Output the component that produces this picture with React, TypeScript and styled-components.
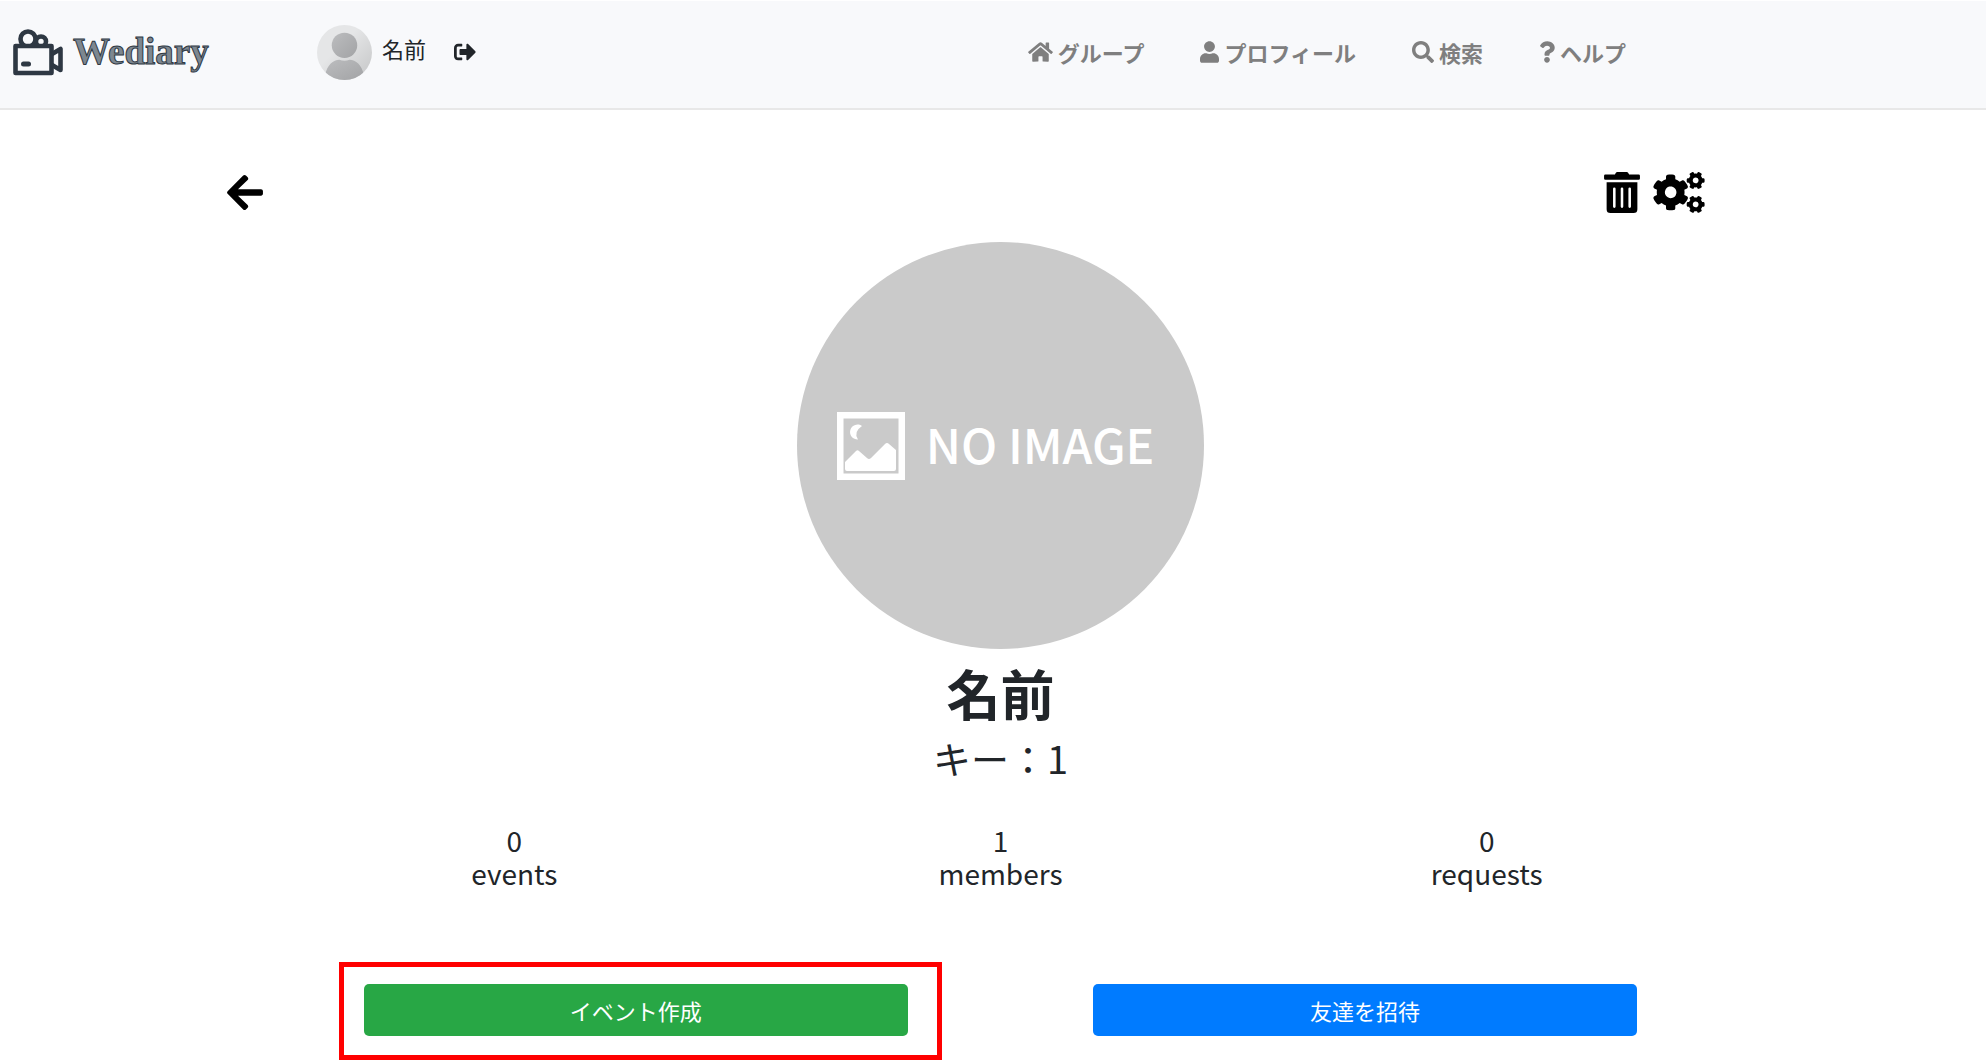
import React from "react";
import styled, { createGlobalStyle } from "styled-components";
import {
  FaArrowLeft,
  FaCogs,
  FaHome,
  FaQuestion,
  FaSearch,
  FaSignOutAlt,
  FaTrashAlt,
  FaUser,
} from "react-icons/fa";

const GlobalStyle = createGlobalStyle`
  *, *::before, *::after { box-sizing: border-box; }
  body {
    margin: 0;
    background: #fff;
    color: #212529;
    font-family: "Noto Sans CJK JP", "Noto Sans", sans-serif;
    font-size: 22px;
    line-height: 32px;
  }
`;

const Header = styled.header`
  display: flex;
  align-items: center;
  min-height: 110px;
  padding: 0 360px 5px 12px;
  background: #f8f9fb;
  border-top: 1px solid #fff;
  border-bottom: 2px solid #e8e8e8;
`;

const Brand = styled.a`
  display: flex;
  align-items: center;
  gap: 9px;
  width: 305px;
  color: #2e3843;
  text-decoration: none;
`;

const BrandName = styled.span`
  color: #7d8790;
  font-family: "Liberation Serif", serif;
  font-size: 37px;
  font-weight: 700;
  line-height: 40px;
  -webkit-text-stroke: 1px #2e3843;
`;

const Account = styled.div`
  display: flex;
  align-items: center;
  gap: 10px;
`;

const AccountName = styled.span`
  padding-bottom: 8px;
`;

const LogoutButton = styled.button`
  display: flex;
  margin-left: 18px;
  padding: 0;
  border: 0;
  background: none;
  color: #212529;
  font-size: 22px;
  cursor: pointer;
`;

const Nav = styled.nav`
  display: flex;
  gap: 56px;
  margin-left: auto;
`;

const NavLink = styled.a<{ $iconWidth: number }>`
  display: flex;
  align-items: center;
  gap: 5px;
  color: #7f7f7f;
  font-weight: 700;
  text-decoration: none;
  white-space: nowrap;

  svg {
    flex: none;
    width: ${(p) => p.$iconWidth}px;
    height: 22px;
  }
`;

const Main = styled.main`
  display: flex;
  flex-direction: column;
  align-items: center;
  padding: 62px 0 26px 15px;
`;

const Toolbar = styled.div`
  display: flex;
  align-self: flex-start;
  align-items: center;
  justify-content: space-between;
  width: 75%;
  margin-left: 212px;
`;

const ToolGroup = styled.div`
  display: flex;
  gap: 13px;
`;

const IconButton = styled.button<{ $iconWidth: number }>`
  display: flex;
  padding: 0;
  border: 0;
  background: none;
  color: #000;
  cursor: pointer;

  svg {
    flex: none;
    width: ${(p) => p.$iconWidth}px;
    height: 41px;
  }
`;

const GroupImage = styled.div`
  display: flex;
  align-items: center;
  justify-content: center;
  gap: 21px;
  width: 407px;
  height: 407px;
  margin-top: 29px;
  padding-right: 10px;
  border-radius: 50%;
  background: #cacaca;
  color: #fff;
  white-space: nowrap;
`;

const GroupImageText = styled.span`
  padding-bottom: 6px;
  font-size: 48px;
  font-weight: 500;
  line-height: 68px;
`;

const GroupName = styled.h1`
  margin: 12px 0 0;
  font-size: 54px;
  font-weight: 700;
  line-height: 64px;
`;

const GroupKey = styled.p`
  margin: 10px 0 0;
  font-size: 38px;
  line-height: 46px;
`;

const Stats = styled.dl`
  display: grid;
  grid-template-columns: repeat(3, 1fr);
  width: 74%;
  margin: 43px 0 0;
`;

const Stat = styled.div`
  display: flex;
  flex-direction: column-reverse;
  text-align: center;
  font-size: 28px;
  line-height: 33px;

  dd {
    margin: 0;
  }
`;

const Actions = styled.div`
  display: grid;
  grid-template-columns: repeat(2, 1fr);
  justify-items: center;
  width: 74%;
  margin-top: 94px;
`;

const ActionSlot = styled.div`
  position: relative;
  width: calc(75% - 3px);
`;

const ActionButton = styled.button<{ $color: string }>`
  display: block;
  width: 100%;
  height: 52px;
  padding: 0;
  border: 0;
  border-radius: 5px;
  background: ${(p) => p.$color};
  color: #fff;
  font: inherit;
  cursor: pointer;
`;

const Highlight = styled.div`
  position: absolute;
  inset: -22px -34px -24px -25px;
  border: 5px solid #f00;
  pointer-events: none;
`;

function CameraLogo() {
  return (
    <svg width="52" height="48" viewBox="0 0 52 48" fill="none" stroke="currentColor" strokeWidth="4.6" strokeLinejoin="round" aria-hidden="true">
      <circle cx="16" cy="11" r="7.5" />
      <circle cx="29" cy="13.500" r="5" />
      <rect x="3.500" y="18" width="36" height="27" fill="#f8f9fb" />
      <path d="M40 26 48.500 21V42L40 37" />
      <path d="M11.500 36H16.500" strokeWidth="5" strokeLinecap="round" />
    </svg>
  );
}

function Avatar() {
  return (
    <svg width="55" height="55" viewBox="0 0 54 54" aria-hidden="true">
      <defs>
        <linearGradient id="avatarBack" x1="0" y1="0" x2="1" y2="1">
          <stop offset="0.4" stopColor="#e5e6e7" />
          <stop offset="1" stopColor="#c4c5c6" />
        </linearGradient>
        <linearGradient id="avatarBody" x1="0" y1="0" x2="1" y2="1">
          <stop offset="0" stopColor="#bcbdbf" />
          <stop offset="1" stopColor="#a2a3a5" />
        </linearGradient>
        <clipPath id="avatarClip"><circle cx="27" cy="27" r="27" /></clipPath>
      </defs>
      <g clipPath="url(#avatarClip)">
        <rect width="54" height="54" fill="url(#avatarBack)" />
        <circle cx="27" cy="20" r="12.5" fill="url(#avatarBody)" />
        <path d="M8 54V49C10 39 16 34 22 34Q27 36 32 34C38 34 44 39 46 49V54Z" fill="url(#avatarBody)" />
      </g>
    </svg>
  );
}

function PictureIcon() {
  return (
    <svg width="68" height="68" viewBox="0 0 68 68" aria-hidden="true">
      <rect x="3.25" y="3.25" width="61.5" height="61.5" fill="none" stroke="#fff" strokeWidth="6.5" />
      <path d="M25 14A7.5 7.5 0 1 0 21 27.500Q16 20 25 14Z" fill="#fff" />
      <path d="M8 50 19 39Q20.500 37.500 22 39L30 46Q32 48 34 46L48 32Q50 30 52 32L59 38V57Q59 59 57 59H10Q8 59 8 57Z" fill="#fff" />
    </svg>
  );
}

const navItems = [
  { label: "グループ", icon: <FaHome />, iconWidth: 25 },
  { label: "プロフィール", icon: <FaUser />, iconWidth: 19 },
  { label: "検索", icon: <FaSearch />, iconWidth: 22 },
  { label: "ヘルプ", icon: <FaQuestion />, iconWidth: 16 },
];

const stats = [
  { label: "events", value: 0 },
  { label: "members", value: 1 },
  { label: "requests", value: 0 },
];

export default function App() {
  return (
    <>
      <GlobalStyle />
      <Header>
        <Brand href="#">
          <CameraLogo />
          <BrandName>Wediary</BrandName>
        </Brand>
        <Account>
          <Avatar />
          <AccountName>名前</AccountName>
          <LogoutButton aria-label="ログアウト"><FaSignOutAlt /></LogoutButton>
        </Account>
        <Nav>
          {navItems.map((item) => (
            <NavLink href="#" key={item.label} $iconWidth={item.iconWidth}>
              {item.icon}
              {item.label}
            </NavLink>
          ))}
        </Nav>
      </Header>
      <Main>
        <Toolbar>
          <IconButton aria-label="戻る" $iconWidth={36}><FaArrowLeft /></IconButton>
          <ToolGroup>
            <IconButton aria-label="削除" $iconWidth={36}><FaTrashAlt /></IconButton>
            <IconButton aria-label="設定" $iconWidth={52}><FaCogs /></IconButton>
          </ToolGroup>
        </Toolbar>
        <GroupImage>
          <PictureIcon />
          <GroupImageText>NO IMAGE</GroupImageText>
        </GroupImage>
        <GroupName>名前</GroupName>
        <GroupKey>キー：1</GroupKey>
        <Stats>
          {stats.map((s) => (
            <Stat key={s.label}>
              <dt>{s.label}</dt>
              <dd>{s.value}</dd>
            </Stat>
          ))}
        </Stats>
        <Actions>
          <ActionSlot>
            <ActionButton $color="#28a745">イベント作成</ActionButton>
            <Highlight />
          </ActionSlot>
          <ActionSlot>
            <ActionButton $color="#007bff">友達を招待</ActionButton>
          </ActionSlot>
        </Actions>
      </Main>
    </>
  );
}
